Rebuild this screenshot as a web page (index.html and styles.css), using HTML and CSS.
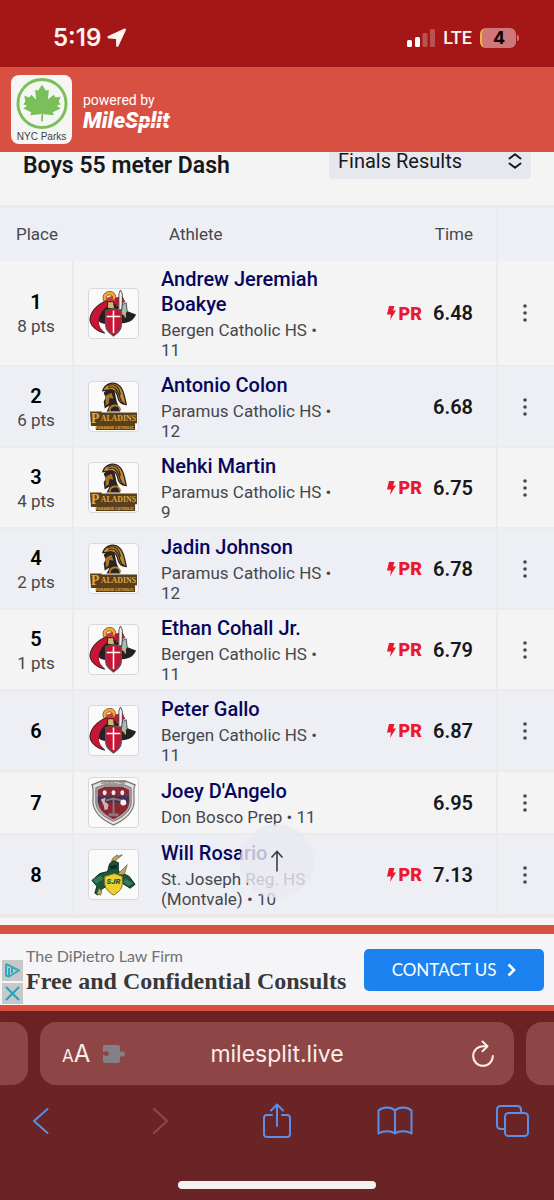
FILE: index.html
```html
<!DOCTYPE html>
<html lang="en">
<head>
<meta charset="utf-8">
<meta name="viewport" content="width=device-width, initial-scale=1">
<title>Boys 55 meter Dash</title>
<link rel="stylesheet" href="styles.css">
</head>
<body>
<svg class="sprite" aria-hidden="true">
  <symbol id="bergen" viewBox="0 0 50 50">
    <path d="M32 9C15 10 2 19 1 31c0 6 6 12 15 14-6-5-8-10-5-15L20 17l14-2z" fill="#c71635" stroke="#241517" stroke-width="1"/>
    <path d="M8 31c2-8 9-15 19-15l13 7 8 3c-2 5-6 8-13 9l-16 1c-6-1-9-2-11-5z" fill="#242122"/>
    <path d="M6 33c1-8 6-14 14-17-7 6-10 11-10 17 0 4 1 7 4 10-5-1-8-5-8-10z" fill="#c71635"/>
    <path d="M15 12c-3-7 4-11 9-9 4 2 4 7 1 10l-3-1c3-3 2-6-1-6s-4 2-3 5l-3 2z" fill="#e8b034" stroke="#96311f" stroke-width=".8"/>
    <path d="M18 9l6-2 2 6-7 1z" fill="#d73834"/><path d="M19 13h6l1 7h-7z" fill="#c9bd70" stroke="#242122"/>
    <path d="M27 9l7-2 3 6-9 5z" fill="#c71635"/>
    <path d="M30.500 21V5l1.500-4 2 4v16z" fill="#eee" stroke="#333" stroke-width=".8"/>
    <path d="M34 16l4-2 1 9-3 5-3-3z" fill="#aab8bd" stroke="#333" stroke-width=".8"/><path d="M30 20l6 5M37 25v4" stroke="#d4b448" stroke-width="1.500"/>
    <path d="M17 22l8-2 8 2v15c0 5-4 8-8 11-4-3-8-6-8-11z" fill="#c71635" stroke="#555" stroke-width="1.200"/>
    <path d="M25 22v23M18 28h14" stroke="#fff" stroke-width="1.600"/>
  </symbol>
  <symbol id="paladins" viewBox="0 0 50 50">
    <path d="M14 9c2-7 9-9 14-7 7 3 8 12 10 21-5 0-8-3-9-9-1-4-3-6-7-6z" fill="#c38b2c" stroke="#2b2321" stroke-width="1.300"/>
    <path d="M20 6c6-3 9 2 11 8 1 5 2 7 5 8M19 4c9-4 12 3 13 9" fill="none" stroke="#2b2321" stroke-width="1.200"/>
    <path d="M15 11c3-3 7-5 11-2l2 10 4 11H18l3-6-5 3-1-7 2-4z" fill="#2b2321"/>
    <path d="M17 14l6-3 2 6-4-1-1 6-3 2z" fill="#a77527"/><path d="M21 30c0-8 10-8 11-1" fill="none" stroke="#b37d29" stroke-width="2"/>
    <path d="M1 30h12v1h36v11H47v7H7v-4H2z" fill="#5a3f1d"/>
    <text class="paladins-initial" x="2" y="42">P</text><text class="paladins-name" x="12" y="40">ALADINS</text>
    <text class="paladins-school" x="7" y="48">PARAMUS CATHOLIC</text>
  </symbol>
  <symbol id="bosco" viewBox="0 0 50 50">
    <path d="M3 7L13 3h24l10 4c-2 3-1 9-1 18-1 11-10 18-21 23C14 43 5 36 4 25 4 16 5 10 3 7z" fill="#e4e3e2" stroke="#77706f" stroke-width="1.200"/>
    <path d="M7 10l8-3h21l7 3v16c-1 8-8 14-18 18C15 40 8 34 7 26z" fill="#aaa" stroke="#77706f"/>
    <path d="M9 12l7-3h18l7 3v13c0 8-8 13-16 17C17 38 10 33 9 25z" fill="#8b2635"/>
    <path d="M9 19h32v6H9z" fill="#33345f"/><path d="M17 23l8-2 8 2M25 21v16" stroke="#8b7773" stroke-width="2" fill="none"/>
    <path d="M20 36h10v3H20z" fill="#8b7773"/>
    <g fill="#f5f1f1"><ellipse cx="16" cy="15" rx="2" ry="2.500"/><ellipse cx="25" cy="15" rx="2" ry="2.500"/><ellipse cx="34" cy="15" rx="2" ry="2.500"/><circle cx="35" cy="25" r="3"/><path d="M12 22l5-2-1 4 4 3-1 5-3 1-1-5z" fill="#d6afb5"/></g>
    <text class="bosco-name" x="25" y="6">DON BOSCO PREP</text>
  </symbol>
  <symbol id="joseph" viewBox="0 0 50 50">
    <path d="M23 13c0-5 3-6 6-8-1 3 3 0 5 0-3 3-7 4-8 9z" fill="#c4a64a" stroke="#263d2c" stroke-width=".6"/>
    <path d="M21 14l4-3 5 2v9l5 2 6 3 6 8-5 4-8-5-16 3-5 3-4 6-3-2 2-7-5-6 8-7 8-2z" fill="#17583c" stroke="#13291f"/>
    <path d="M21 16l8-1-1 4-6 1z" fill="#0d2c21"/><path d="M4 30l8-4 3 3-8 6zM37 29l8 5-5 3-5-4z" fill="#33795b"/>
    <path d="M29 25l10-10-3 10zM8 45l2-6 3 3-1 4z" fill="#c2aa54" stroke="#444" stroke-width=".6"/>
    <path d="M16 27l10-3 8 3v8c-1 6-4 8-9 11-5-3-8-6-9-11z" fill="#f0cf31" stroke="#826d24"/>
    <text class="joseph-name" x="25" y="35">SJR</text>
  </symbol>
  <symbol id="bolt" viewBox="0 0 9 14"><path d="M2 0h5.500L6 4.500h3L3 14l1-5.500H0z" fill="currentColor"/></symbol>
  <symbol id="dots" viewBox="0 0 4 18"><g fill="currentColor"><circle cx="2" cy="2" r="1.800"/><circle cx="2" cy="9" r="1.800"/><circle cx="2" cy="16" r="1.800"/></g></symbol>
</svg>

<div class="status">
  <div class="clock">5:19
    <svg width="20" height="20" viewBox="0 0 20 20"><path d="M1.200 8L17 .8q2.500-.8 1.700 1.700L11.500 18q-1.500 2-2.300 0L9 11 1.800 10.500Q-.6 9.500 1.200 8z" fill="currentColor"/></svg>
  </div>
  <div class="signal">
    <svg width="28" height="18" viewBox="0 0 28 18" fill="#fff"><rect y="11" width="5" height="7" rx="1.500"/><rect x="8" y="8" width="5" height="10" rx="1.500"/><g opacity=".25"><rect x="15.500" y="4" width="5" height="14" rx="1.500"/><rect x="23" width="5" height="18" rx="1.500"/></g></svg>
    <span class="network">LTE</span>
    <span class="battery">4</span>
  </div>
</div>

<header class="brand">
  <div class="parks">
    <svg width="54" height="54" viewBox="0 0 54 54"><circle cx="27" cy="27" r="24.500" fill="none" stroke="#7abf59" stroke-width="3"/><path d="M27 8l4 6 3-1-1 10 6-5 2 3 5-1-2 5 2 3-4 1 4 3-8 4 1 3-10-1-.8-1L28 45h-2l.5-8L25 38l-10 1 1-3-8-4 4-3-4-1 2-3-1-6 5 2 2-3 5 5-1-10 3 1z" fill="#7abf59"/></svg>
    <span>NYC Parks</span>
  </div>
  <div class="powered"><span>powered by</span><strong class="milesplit">MileSplit</strong></div>
</header>

<main class="results">
  <div class="event">
    <h1>Boys 55 meter Dash</h1>
    <div class="picker">
      <select aria-label="Round"><option>Finals Results</option></select>
      <svg width="14" height="16" viewBox="0 0 14 16" fill="none" stroke="#16181d" stroke-width="2" stroke-linecap="round" stroke-linejoin="round"><path d="M1.500 5.500L7 1.200l5.500 4.300M1.500 10.500L7 14.800l5.500-4.300"/></svg>
    </div>
  </div>
  <table>
    <colgroup><col class="c-place"><col class="c-logo"><col><col class="c-time"><col class="c-menu"></colgroup>
    <thead><tr><th>Place</th><th class="h-athlete" colspan="2">Athlete</th><th class="h-time">Time</th><th aria-label="Menu"></th></tr></thead>
    <tbody>
      <tr><td class="place"><b>1</b><span>8 pts</span></td><td class="logo"><svg><use href="#bergen"/></svg></td><td class="athlete"><a href="#">Andrew Jeremiah Boakye</a><p>Bergen Catholic HS • 11</p></td><td class="time"><div><span class="pr"><svg><use href="#bolt"/></svg>PR</span><b>6.48</b></div></td><td class="menu"><button aria-label="More"><svg><use href="#dots"/></svg></button></td></tr>
      <tr><td class="place"><b>2</b><span>6 pts</span></td><td class="logo"><svg><use href="#paladins"/></svg></td><td class="athlete"><a href="#">Antonio Colon</a><p>Paramus Catholic HS • 12</p></td><td class="time"><div><b>6.68</b></div></td><td class="menu"><button aria-label="More"><svg><use href="#dots"/></svg></button></td></tr>
      <tr><td class="place"><b>3</b><span>4 pts</span></td><td class="logo"><svg><use href="#paladins"/></svg></td><td class="athlete"><a href="#">Nehki Martin</a><p>Paramus Catholic HS • 9</p></td><td class="time"><div><span class="pr"><svg><use href="#bolt"/></svg>PR</span><b>6.75</b></div></td><td class="menu"><button aria-label="More"><svg><use href="#dots"/></svg></button></td></tr>
      <tr><td class="place"><b>4</b><span>2 pts</span></td><td class="logo"><svg><use href="#paladins"/></svg></td><td class="athlete"><a href="#">Jadin Johnson</a><p>Paramus Catholic HS • 12</p></td><td class="time"><div><span class="pr"><svg><use href="#bolt"/></svg>PR</span><b>6.78</b></div></td><td class="menu"><button aria-label="More"><svg><use href="#dots"/></svg></button></td></tr>
      <tr><td class="place"><b>5</b><span>1 pts</span></td><td class="logo"><svg><use href="#bergen"/></svg></td><td class="athlete"><a href="#">Ethan Cohall Jr.</a><p>Bergen Catholic HS • 11</p></td><td class="time"><div><span class="pr"><svg><use href="#bolt"/></svg>PR</span><b>6.79</b></div></td><td class="menu"><button aria-label="More"><svg><use href="#dots"/></svg></button></td></tr>
      <tr><td class="place"><b>6</b></td><td class="logo"><svg><use href="#bergen"/></svg></td><td class="athlete"><a href="#">Peter Gallo</a><p>Bergen Catholic HS • 11</p></td><td class="time"><div><span class="pr"><svg><use href="#bolt"/></svg>PR</span><b>6.87</b></div></td><td class="menu"><button aria-label="More"><svg><use href="#dots"/></svg></button></td></tr>
      <tr><td class="place"><b>7</b></td><td class="logo"><svg><use href="#bosco"/></svg></td><td class="athlete"><a href="#">Joey D'Angelo</a><p>Don Bosco Prep • 11</p></td><td class="time"><div><b>6.95</b></div></td><td class="menu"><button aria-label="More"><svg><use href="#dots"/></svg></button></td></tr>
      <tr><td class="place"><b>8</b></td><td class="logo"><svg><use href="#joseph"/></svg></td><td class="athlete"><a href="#">Will Rosario</a><p>St. Joseph Reg. HS (Montvale) • 10</p></td><td class="time"><div><span class="pr"><svg><use href="#bolt"/></svg>PR</span><b>7.13</b></div></td><td class="menu"><button aria-label="More"><svg><use href="#dots"/></svg></button></td></tr>
    </tbody>
  </table>
  <button class="to-top" aria-label="Back to top"><svg width="14" height="22" viewBox="0 0 14 22" fill="none" stroke="#3c3e45" stroke-width="1.600"><path d="M7 21.500V2M1.500 7.500L7 1.500l5.500 6"/></svg></button>
</main>

<aside class="ad">
  <div class="ad-marks">
    <button aria-label="Ad choices"><svg width="17" height="17" viewBox="0 0 17 17" fill="none" stroke="#35a9bd" stroke-width="2" stroke-linejoin="round"><path d="M2 2l13 6.500L5 14.500M2 2v11.500l3 1V6M8 6v5"/></svg></button>
    <button aria-label="Close ad"><svg width="15" height="15" viewBox="0 0 15 15" fill="none" stroke="#2aa0b8" stroke-width="2"><path d="M1 1l13 13M14 1L1 14"/></svg></button>
  </div>
  <div class="ad-copy"><span>The DiPietro Law Firm</span><strong>Free and Confidential Consults</strong></div>
  <a class="cta" href="#">CONTACT US<svg width="9" height="14" viewBox="0 0 9 14" fill="none" stroke="#fff" stroke-width="2.600"><path d="M1.500 1.500L7 7l-5.500 5.500"/></svg></a>
</aside>

<footer class="browser">
  <div class="tabs">
    <div class="tab tab-prev"></div>
    <div class="tab tab-main">
      <button class="reader" aria-label="Page settings"><small>A</small>A</button>
      <svg class="puzzle" width="24" height="20" viewBox="0 0 24 20"><path d="M3 1h13q2 0 2 2v5c2-1.500 5-.5 5 2s-3 3.500-5 2v5q0 2-2 2H3q-2 0-2-2v-6h1c2 2 5 1 5-1.500S4 6.500 2 8H1V3q0-2 2-2z" fill="#828286"/></svg>
      <span class="address">milesplit.live</span>
      <button class="reload" aria-label="Reload"><svg width="24" height="28" viewBox="0 0 24 28" fill="none" stroke="#fbeeea" stroke-width="2" stroke-linecap="round" stroke-linejoin="round"><path d="M21.800 16A9.800 9.800 0 1 1 12 6.200h4M11.500 1.500l5 4.700-5 5"/></svg></button>
    </div>
    <div class="tab tab-next"></div>
  </div>
  <nav class="tools">
    <button aria-label="Back"><svg width="18" height="28" viewBox="0 0 18 28"><path d="M15.500 2L2 14l13.500 12"/></svg></button>
    <button aria-label="Forward" disabled><svg width="18" height="28" viewBox="0 0 18 28"><path d="M4 2l13 12L4 26"/></svg></button>
    <button aria-label="Share"><svg width="28" height="36" viewBox="0 0 28 36"><path d="M9 12H4q-3 0-3 3v16q0 3 3 3h20q3 0 3-3V15q0-3-3-3h-5M14 23V2M8 7.500L14 1.500l6 6"/></svg></button>
    <button aria-label="Bookmarks"><svg width="36" height="30" viewBox="0 0 36 30"><path d="M18 4.500C14 .5 6 .5 1.500 4.500v23c4.500-3 12.500-3 16.500 0 4-3 12-3 16.500 0v-23C30 .5 22 .5 18 4.500zM18 4.500v23"/></svg></button>
    <button aria-label="Tabs"><svg width="34" height="32" viewBox="0 0 34 32"><path d="M9 24H5q-4 0-4-4V5q0-4 4-4h16q4 0 4 4v3"/><rect x="9" y="8" width="23" height="23" rx="3.500"/></svg></button>
  </nav>
  <div class="home-bar"></div>
</footer>
</body>
</html>
```
FILE: styles.css
```css
* { box-sizing: border-box; }
body { margin: 0; background: #f4f4f5; color: #16181d; font-family: Roboto, sans-serif; }
button { margin: 0; padding: 0; border: 0; background: none; font: inherit; color: inherit; display: flex; align-items: center; justify-content: center; }
svg { display: block; }
p { margin: 0; }
.sprite { position: absolute; width: 0; height: 0; }

/* Phone status bar */
.status { height: 67px; padding: 8px 38px 0 53px; display: flex; align-items: center; justify-content: space-between; background: #a51717; color: #fff5f2; font-family: Inter, sans-serif; }
.clock { display: flex; align-items: center; gap: 6px; font-size: 24px; font-weight: 600; }
.signal { display: flex; align-items: center; gap: 8px; font-size: 18px; font-weight: 500; }
.network { font: 500 18px Roboto, sans-serif; }
.battery { position: relative; width: 36px; height: 20px; border-radius: 6px; border-left: 2px solid #f0b340; background: #cf7778; color: #0b0000; font-weight: 700; line-height: 20px; text-align: center; }
.battery::after { content: ""; position: absolute; left: 35px; top: 7px; width: 2px; height: 6px; border-radius: 0 2px 2px 0; background: #cf7778; }

/* Site header */
.brand { position: relative; z-index: 1; height: 85px; padding: 0 11px; display: flex; align-items: center; gap: 11px; background: #d85041; color: #fff; }
.parks { width: 61px; height: 69px; padding-top: 2px; border-radius: 8px; background: #f5f5f3; color: #3c4045; display: flex; flex-direction: column; align-items: center; font: 500 10px/14px "Liberation Sans", sans-serif; }
.powered { display: flex; flex-direction: column; padding-top: 4px; font-size: 14px; line-height: 18px; }
.milesplit { position: relative; font-size: 22px; line-height: 23px; font-weight: 900; font-style: italic; }
.milesplit::after { content: ""; position: absolute; left: 49px; right: 0; top: 13px; height: 1px; background: #d85041; }

/* Results */
.results { position: relative; border-bottom: 7px solid #f5f5f6; }
.event { display: flex; justify-content: space-between; align-items: center; margin-top: -9px; padding: 0 23px 26px; }
.event h1 { margin: 0; padding-top: 10px; font-size: 23px; line-height: 26px; font-weight: 600; }
.picker { position: relative; width: 202px; }
.picker select { appearance: none; width: 100%; height: 36px; padding: 0 9px; border: 0; border-radius: 4px; background: #e7e8ee; color: #16181d; font: 20px Roboto, sans-serif; }
.picker svg { position: absolute; right: 9px; top: 10px; pointer-events: none; }
table { width: 100%; table-layout: fixed; border-collapse: separate; border-spacing: 0; border-top: 3px solid #ebebed; border-bottom: 4px solid #e9e9ea; }
.c-place { width: 74px; }
.c-logo { width: 78px; }
.c-time { width: 161px; }
.c-menu { width: 56px; }
th { height: 53px; padding: 0 0 2px; background: #eeeff4; color: #45474d; font-size: 17px; font-weight: 400; }
.h-athlete { padding-left: 95px; text-align: left; }
.h-time { padding-right: 23px; border-right: 2px solid #e9eaee; text-align: right; }
td { padding: 0; vertical-align: middle; border-bottom: 2px solid #eaebed; }
tbody tr:nth-child(even) { background: #eeeff4; }
tbody tr:last-child td { border-bottom: 0; }
.place { border-right: 2px solid #eaebed; text-align: center; color: #45474d; font-size: 17px; line-height: 24px; }
.place b { display: block; color: #000; font-size: 20px; font-weight: 600; }
.place b:not(:last-child) { padding-top: 2px; }
.place span { display: block; }
.logo { padding: 5px 0 5px 14px; }
.logo svg { width: 51px; height: 51px; border: 1px solid #d8d9dc; border-radius: 4px; background: #fafafa; }
.athlete { padding: 6px 0 5px 9px; }
.athlete a { display: block; color: #06065c; font-size: 20px; line-height: 25px; font-weight: 500; text-decoration: none; }
.athlete p { margin-top: 3px; color: #45474d; font-size: 17px; line-height: 20px; }
.time { padding-right: 23px; border-right: 2px solid #eaebed; }
.time div { display: flex; align-items: center; justify-content: flex-end; gap: 11px; font-size: 20px; }
.time b { font-weight: 600; }
.pr { display: flex; align-items: center; gap: 3px; color: #e8192f; font-size: 18px; font-weight: 900; }
.pr svg { width: 9px; height: 14px; }
.menu { padding-right: 2px; }
.menu button { width: 100%; height: 32px; color: #45474d; }
.menu svg { width: 4px; height: 18px; }
.to-top { position: absolute; left: 50%; bottom: 20px; width: 74px; height: 74px; margin-left: -37px; border-radius: 50%; background: rgba(233, 233, 241, .8); }
.paladins-initial { font: 900 14px "Liberation Serif", serif; fill: #e0a840; }
.paladins-name { font: 900 8px "Liberation Serif", serif; fill: #e0a840; }
.paladins-school { font: 700 4px Roboto, sans-serif; fill: #e0a840; }
.bosco-name { font: 700 3px Roboto, sans-serif; fill: #666; text-anchor: middle; }
.joseph-name { font: italic 900 8px Roboto, sans-serif; fill: #17583c; text-anchor: middle; }

/* Banner */
.ad { min-height: 86px; border: solid #d85041; border-width: 9px 0 6px; display: flex; align-items: center; padding: 0 10px 0 2px; gap: 3px; background: #f5f5f7; }
.ad-marks { align-self: flex-end; display: flex; flex-direction: column; gap: 2px; padding-bottom: 1px; }
.ad-marks button { width: 21px; height: 21px; background: #c8c8ca; }
.ad-copy { flex: 1; display: flex; flex-direction: column; white-space: nowrap; }
.ad-copy span { color: #707174; font: 16px/22px Lato, sans-serif; }
.ad-copy strong { color: #38383b; font: 700 24px/28px "Liberation Serif", serif; }
.cta { width: 180px; height: 42px; border-radius: 5px; background: #1c82ef; color: #fff; display: flex; align-items: center; justify-content: center; gap: 11px; font: 17px Lato, sans-serif; text-decoration: none; }

/* Browser chrome */
.browser { padding: 11px 0; background: linear-gradient(#6b2122, #6b2425 30%); }
.tabs { display: flex; gap: 12px; }
.tab { height: 63px; background: #8e4546; }
.tab-prev { width: 28px; border-radius: 0 16px 16px 0; }
.tab-next { width: 28px; border-radius: 16px 0 0 16px; }
.tab-main { position: relative; flex: 1; border-radius: 16px; display: flex; align-items: center; padding: 0 19px 0 22px; gap: 12px; color: #fbeeea; font-family: Inter, sans-serif; }
.reader { align-items: baseline; font-size: 24px; }
.reader small { font-size: 17px; }
.address { position: absolute; left: 0; right: 0; text-align: center; font-size: 23px; pointer-events: none; }
.reload { margin-left: auto; }
.tools { display: flex; justify-content: space-between; padding: 16px 21px 0; }
.tools button { width: 40px; height: 40px; }
.tools svg { fill: none; stroke: #5a8ee8; stroke-width: 2; stroke-linecap: round; stroke-linejoin: round; }
.tools button:disabled svg { stroke: #8b4b4d; }
.home-bar { width: 198px; height: 8px; margin: 40px auto 0; border-radius: 4px; background: #f5f3f2; }
```
